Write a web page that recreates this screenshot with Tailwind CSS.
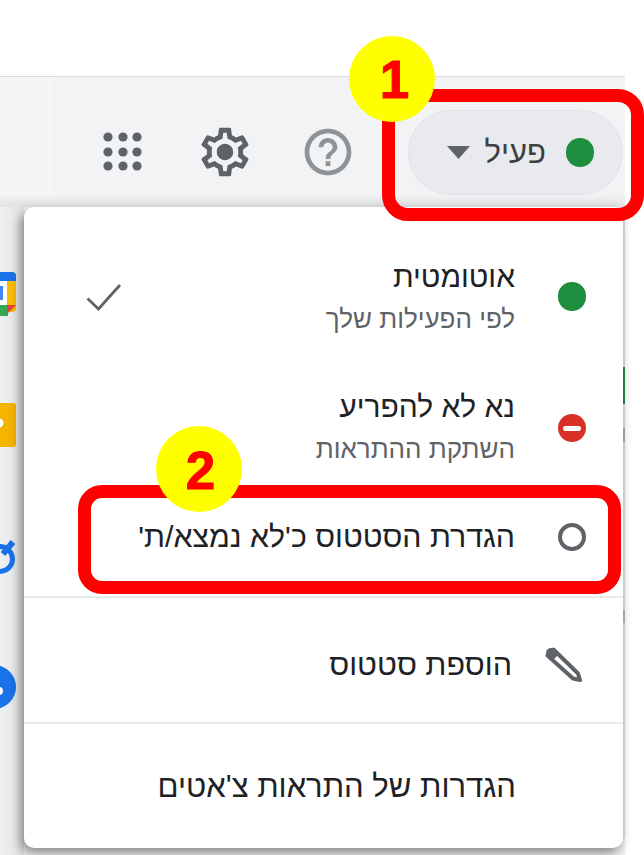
<!DOCTYPE html>
<html lang="he">
<head>
<meta charset="utf-8">
<script src="https://cdn.jsdelivr.net/npm/@tailwindcss/browser@4"></script>
</head>
<body class="bg-white font-['Liberation_Sans',sans-serif]">
<div class="relative w-[644px] h-[855px] overflow-hidden bg-white">
  <div class="h-[76px]"></div>
  <div class="relative w-[625px] h-[779px] bg-[#f1f3f4] border-t border-[#d9dbdd]">
    <!-- lighter patch of the side panel, top left -->
    <div class="absolute left-0 top-0 w-[53px] h-[123px] bg-[#f4f5f6]"></div>
    <!-- top bar -->
    <header class="relative h-[130px] flex items-center justify-end pr-[2px] pt-[20px] bg-gradient-to-b from-transparent from-[90%] to-[#e0e2e4]">
      <div class="flex items-center w-[58px] h-[58px] mr-[44px]">
        <svg class="w-[58px] h-[58px]" viewBox="0 0 58 58" fill="#5f6368">
          <circle cx="14" cy="14" r="4.6"/><circle cx="29" cy="14" r="4.6"/><circle cx="43" cy="14" r="4.6"/>
          <circle cx="14" cy="29" r="4.6"/><circle cx="29" cy="29" r="4.6"/><circle cx="43" cy="29" r="4.6"/>
          <circle cx="14" cy="43" r="4.6"/><circle cx="29" cy="43" r="4.6"/><circle cx="43" cy="43" r="4.6"/>
        </svg>
      </div>
      <svg class="w-[58px] h-[58px] mr-[46px]" viewBox="0 0 24 24" fill="#5f6368"><path d="M19.43 12.98c.04-.32.07-.64.07-.98 0-.34-.03-.66-.07-.98l2.11-1.65c.19-.15.24-.42.12-.64l-2-3.46c-.09-.16-.26-.25-.44-.25-.06 0-.12.01-.17.03l-2.49 1c-.52-.4-1.08-.73-1.69-.98l-.38-2.65C14.46 2.18 14.25 2 14 2h-4c-.25 0-.46.18-.49.42l-.38 2.65c-.61.25-1.17.59-1.69.98l-2.49-1c-.06-.02-.12-.03-.18-.03-.17 0-.34.09-.43.25l-2 3.46c-.13.22-.07.49.12.64l2.11 1.65c-.04.32-.07.65-.07.98 0 .33.03.66.07.98l-2.11 1.65c-.19.15-.24.42-.12.64l2 3.46c.09.16.26.25.44.25.06 0 .12-.01.17-.03l2.49-1c.52.4 1.08.73 1.69.98l.38 2.65c.03.24.24.42.49.42h4c.25 0 .46-.18.49-.42l.38-2.65c.61-.25 1.17-.59 1.69-.98l2.49 1c.06.02.12.03.18.03.17 0 .34-.09.43-.25l2-3.46c.12-.22.07-.49-.12-.64l-2.11-1.65zm-1.98-1.71c.04.31.05.52.05.73 0 .21-.02.43-.05.73l-.14 1.13.89.7 1.08.84-.7 1.21-1.27-.51-1.04-.42-.9.68c-.43.32-.84.56-1.25.73l-1.06.43-.16 1.13-.2 1.35h-1.4l-.19-1.35-.16-1.13-1.06-.43c-.43-.18-.83-.41-1.23-.71l-.91-.7-1.06.43-1.27.51-.7-1.21 1.08-.84.89-.7-.14-1.13c-.03-.31-.05-.54-.05-.74s.02-.43.05-.73l.14-1.13-.89-.7-1.08-.84.7-1.21 1.27.51 1.04.42.9-.68c.43-.32.84-.56 1.25-.73l1.06-.43.16-1.13.2-1.35h1.39l.19 1.35.16 1.13 1.06.43c.43.18.83.41 1.23.71l.91.7 1.06-.43 1.27-.51.7 1.21-1.07.85-.89.7.14 1.13zM12 8.600c-1.880 0-3.400 1.520-3.400 3.400s1.520 3.400 3.400 3.400 3.400-1.520 3.400-3.400-1.520-3.400-3.400-3.400z"/></svg>
      <svg class="w-[56px] h-[56px] mr-[52px]" viewBox="0 0 24 24" fill="#909396"><path d="M11 18h2v-2h-2v2zm1-16C6.48 2 2 6.48 2 12s4.48 10 10 10 10-4.48 10-10S17.52 2 12 2zm0 18c-4.41 0-8-3.59-8-8s3.59-8 8-8 8 3.59 8 8-3.59 8-8 8zm0-14c-2.21 0-4 1.79-4 4h2c0-1.1.9-2 2-2s2 .9 2 2c0 2-3 1.75-3 5h2c0-2.25 3-2.5 3-5 0-2.21-1.79-4-4-4z"/></svg>
      <!-- status pill -->
      <div dir="rtl" class="flex items-center w-[215px] h-[85px] rounded-full bg-[#e8eaed] border border-[#e0e2e5] pr-[28px]">
        <span class="w-[28px] h-[29px] rounded-full bg-[#1e8e3e]"></span>
        <span class="mr-[20px] text-[31px] leading-none text-[#3c4043]">פעיל</span>
        <svg class="mr-[15px] w-[23px] h-[13px]" viewBox="0 0 23 13" fill="#5f6368"><polygon points="0,0 23,0 11.5,13"/></svg>
      </div>
    </header>

    <div class="relative flex h-[649px]">
      <!-- side panel apps, partly hidden by the menu -->
      <aside class="w-[24px] shrink-0 flex flex-col items-start bg-gradient-to-r from-[#eef0f2] to-[#e2e4e6]">
        <svg class="mt-[65px] w-[17px] h-[44px]" viewBox="0 0 17 44">
          <rect x="-4" y="0" width="20" height="40" rx="4" fill="#fbbc04"/>
          <path d="M-4 0h16a4 4 0 0 1 4 4v5h-20z" fill="#1a73e8"/>
          <rect x="-4" y="9" width="11" height="24" fill="#fff"/>
          <rect x="-4" y="14" width="7" height="14" fill="#4285f4"/>
          <path d="M-4 33h12v11h-12z" fill="#34a853"/>
          <path d="M7 33h9l-9 9z" fill="#ea4335"/>
        </svg>
        <svg class="mt-[87px] w-[17px] h-[44px]" viewBox="0 0 17 44">
          <rect x="-6" y="0" width="22" height="44" rx="3" fill="#f4b400"/>
          <circle cx="-1" cy="20" r="4.500" fill="#fff"/>
        </svg>
        <svg class="mt-[90px] w-[17px] h-[38px]" viewBox="0 0 17 38" fill="none">
          <circle cx="0" cy="22" r="12.500" stroke="#1a73e8" stroke-width="5"/>
          <path d="M3 17L13 5" stroke="#1a73e8" stroke-width="6"/>
        </svg>
        <svg class="mt-[90px] w-[17px] h-[44px]" viewBox="0 0 17 44">
          <circle cx="-6" cy="22" r="22" fill="#1a73e8"/>
          <circle cx="-1" cy="26" r="4" fill="#fff"/>
        </svg>
      </aside>

      <!-- status menu -->
      <div dir="rtl" class="relative w-[599px] h-[641px] bg-white rounded-[10px] shadow-[-3px_5px_12px_rgba(0,0,0,0.45)] flex flex-col text-[#202124]">
        <div class="h-[150px] flex items-start pt-[51px] pl-[62px]">
          <span class="shrink-0 w-[28px] h-[29px] mr-[37px] mt-[24px] rounded-full bg-[#1e8e3e]"></span>
          <div class="mr-[43px] flex-1">
            <div class="text-[30px] leading-[38px]">אוטומטית</div>
            <div class="mt-[7px] text-[26px] leading-[32px] text-[#5f6368]">לפי הפעילות שלך</div>
          </div>
          <svg class="w-[36px] h-[28px] mt-[25px]" viewBox="0 0 36 28" fill="none"><path d="M1.500 15.500l11 10.500L34 2" stroke="#5f6368" stroke-width="2.800"/></svg>
        </div>
        <div class="h-[130px] flex items-start pt-[31px]">
          <span class="shrink-0 relative w-[28px] h-[28px] mr-[37px] mt-[26px] rounded-full bg-[#d93025] flex items-center justify-center"><span class="w-[18px] h-[5px] rounded-full bg-white"></span></span>
          <div class="mr-[43px]">
            <div class="text-[30px] leading-[38px]">נא לא להפריע</div>
            <div class="mt-[7px] text-[26px] leading-[32px] text-[#5f6368]">השתקת ההתראות</div>
          </div>
        </div>
        <div class="h-[111px] flex items-center pb-[10px] border-b-2 border-[#e8eaed]">
          <span class="shrink-0 w-[28px] h-[28px] mr-[37px] rounded-full border-[4px] border-[#5f6368]"></span>
          <div class="mr-[43px] text-[30.300px] leading-[38px]">הגדרת הסטטוס כ'לא נמצא/ת'</div>
        </div>
        <div class="h-[126px] flex items-center pt-[8px] border-b-2 border-[#e8eaed]">
          <svg class="shrink-0 w-[37px] h-[35px] mr-[41px]" viewBox="0 0 37 35">
            <path d="M2.500 8.500L8.500 2.500L33 26.500L35 33L28 31.500Z" fill="#fff" stroke="#5f6368" stroke-width="4" stroke-linejoin="round"/>
            <path d="M1 8L8 1L14 7L7 14Z" fill="#5f6368"/>
            <circle cx="6" cy="6" r="5" fill="#5f6368"/>
          </svg>
          <div class="mr-[33px] text-[30.500px] leading-[38px]">הוספת סטטוס</div>
        </div>
        <div class="flex-1 flex items-center pr-[107px] pt-[2px] text-[31px] leading-[38px]">הגדרות של התראות צ'אטים</div>
      </div>
    </div>

    <!-- edge of the window behind the menu -->
    <div class="absolute top-[131px] right-0 w-[2px] h-[630px] bg-[#c8cacc]">
      <div class="mt-[159px] h-[37px] bg-[#1e7e3e]"></div>
      <div class="mt-[24px] h-[14px] bg-[#9a9c9e]"></div>
      <div class="mt-[168px] h-[13px] bg-[#a4a6a8]"></div>
    </div>
  </div>

  <!-- callouts drawn over the screenshot -->
  <div class="absolute left-[382px] top-[89px] w-[262px] h-[132px] border-[13px] border-[#ff0000] rounded-[26px]"></div>
  <div class="absolute left-[78px] top-[485px] w-[543px] h-[109px] border-[13px] border-[#ff0000] rounded-[24px]"></div>
  <div class="absolute left-[349px] top-[36px] w-[86px] h-[86px] rounded-full bg-[#ffff00] flex items-center justify-center pl-[5px] text-[53px] font-bold leading-none text-[#ff0000] [-webkit-text-stroke:1px_#ff0000]">1</div>
  <div class="absolute left-[156px] top-[426px] w-[86px] h-[86px] rounded-full bg-[#ffff00] flex items-center justify-center pl-[3px] pt-[2px] text-[53px] font-bold leading-none text-[#ff0000] [-webkit-text-stroke:1px_#ff0000]">2</div>
</div>
</body>
</html>
